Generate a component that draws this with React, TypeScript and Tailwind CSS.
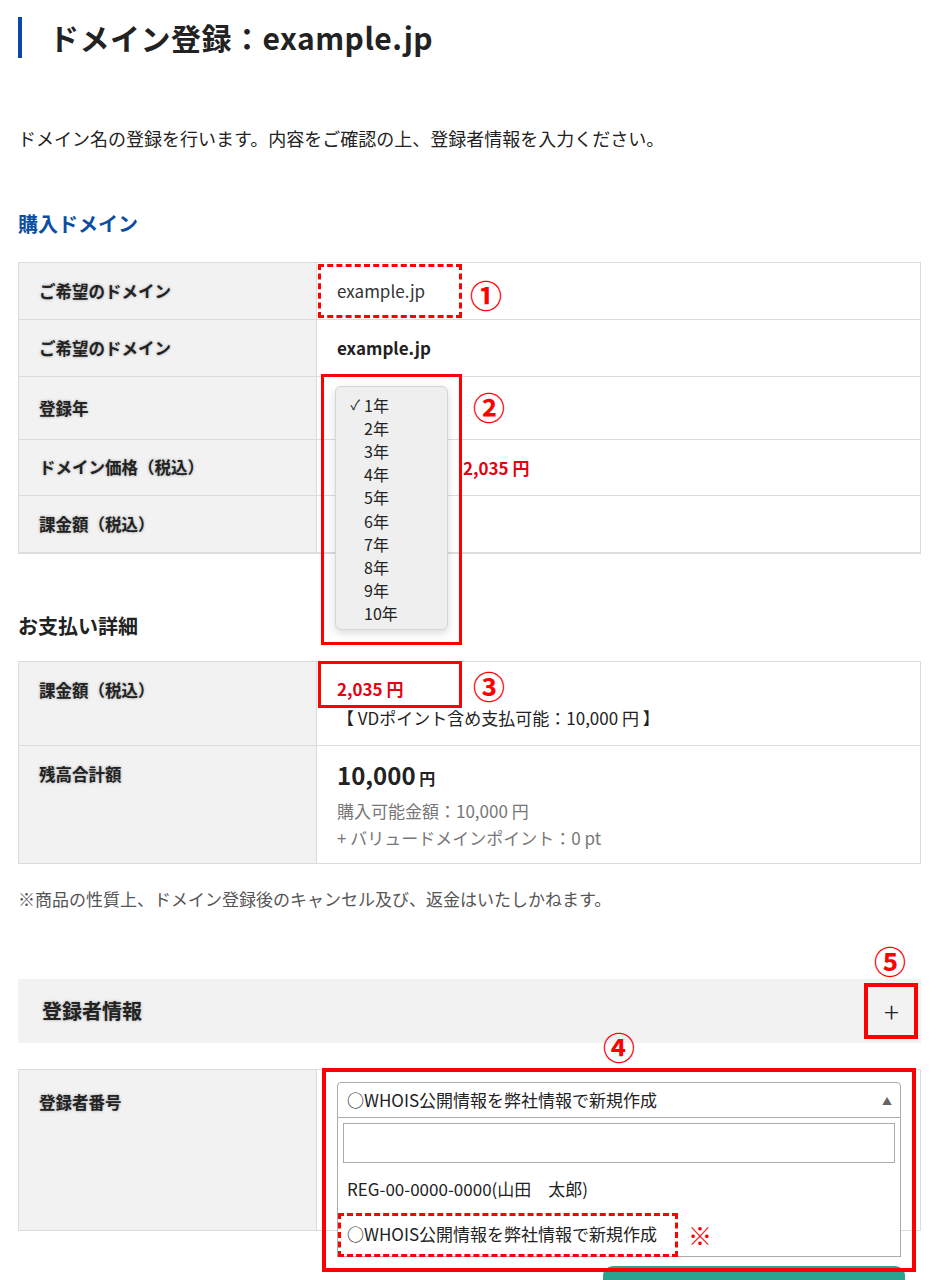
const font = { fontFamily: '"Noto Sans CJK JP", "Noto Sans", sans-serif' };

const label =
  "bg-[#f2f2f2] border-r border-[#dcdcdc] w-[298px] shrink-0 pl-[20px] text-[16.5px] font-bold text-[#222] [text-shadow:0_0_3px_rgba(0,0,0,0.35)]";

function Row({ name, h, children }: { name: string; h: string; children?: React.ReactNode }) {
  return (
    <div className={`flex border-b border-[#dcdcdc] last:border-b-0 ${h}`}>
      <div className={`${label} flex items-center`}>{name}</div>
      <div className="flex-1 flex items-center pl-[20px] text-[17px] text-[#222]">{children}</div>
    </div>
  );
}

function Mark({ children, className }: { children: React.ReactNode; className: string }) {
  return (
    <span className={`absolute text-[#f00] text-[32px] leading-none font-bold ${className}`}>{children}</span>
  );
}

export default function App() {
  const years = ["1年", "2年", "3年", "4年", "5年", "6年", "7年", "8年", "9年", "10年"];
  return (
    <div style={font} className="bg-white w-[940px] h-[1280px] overflow-hidden pt-[17px] pl-[18px] pr-[19px] text-[#222]">
      <h1 className="h-[41px] border-l-[4px] border-[#0a47a9] flex items-center pl-[27px] text-[30px] font-bold tracking-[0.5px]">
        ドメイン登録：example.jp
      </h1>

      <p className="mt-[68px] text-[18px] leading-[24px]">
        ドメイン名の登録を行います。内容をご確認の上、登録者情報を入力ください。
      </p>

      <h2 className="mt-[61px] text-[20px] leading-[26px] font-bold text-[#0a4ea3]">購入ドメイン</h2>

      {/* table 1 */}
      <div className="relative mt-[25px] border border-[#dcdcdc]">
        <Row name="ご希望のドメイン" h="h-[57px]">
          <span className="text-[#333]">example.jp</span>
        </Row>
        <Row name="ご希望のドメイン" h="h-[57px]">
          <span className="font-bold">example.jp</span>
        </Row>
        <Row name="登録年" h="h-[63px]" />
        <Row name="ドメイン価格（税込）" h="h-[56px]">
          <span className="pl-[126px] font-bold text-[#e60012]">2,035 円</span>
        </Row>
        <Row name="課金額（税込）" h="h-[57px]" />

        <div className="absolute left-[299px] top-[1px] w-[144px] h-[54px] border-[3px] border-dashed border-[#f00]" />
        <Mark className="left-[451px] top-[15px]">①</Mark>

        <div className="absolute left-[302px] top-[111px] w-[141px] h-[271px] border-[3px] border-[#f00]" />
        <div className="absolute left-[316px] top-[123px] w-[113px] h-[244px] rounded-[6px] bg-[#efefef] border border-[#d6d6d6] shadow-[0_3px_8px_rgba(0,0,0,0.15)] pt-[6px]">
          {years.map((y, i) => (
            <div key={y} className="h-[23.2px] flex items-center text-[16px] text-[#222]">
              <span className="w-[28px] text-right pr-[4px] text-[14px]">{i === 0 ? "✓" : ""}</span>
              {y}
            </div>
          ))}
        </div>
        <Mark className="left-[454px] top-[127px]">②</Mark>
      </div>

      <h2 className="mt-[59px] text-[20px] leading-[26px] font-bold">お支払い詳細</h2>

      {/* table 2 */}
      <div className="relative mt-[22px] border border-[#dcdcdc]">
        <div className="flex border-b border-[#dcdcdc] h-[84px]">
          <div className={`${label} pt-[16px]`}>課金額（税込）</div>
          <div className="flex-1 pl-[20px] pt-[15px]">
            <div className="text-[17px] leading-[24px] font-bold text-[#e60012]">2,035 円</div>
            <div className="text-[17px] leading-[24px] mt-[5px] text-[#222]">【 VDポイント含め支払可能：10,000 円 】</div>
          </div>
        </div>
        <div className="flex h-[117px]">
          <div className={`${label} pt-[16px]`}>残高合計額</div>
          <div className="flex-1 pl-[20px] pt-[13px]">
            <div className="leading-[32px] font-semibold">
              <span className="text-[24px]">10,000</span> <span className="text-[16px]">円</span>
            </div>
            <div className="mt-[3px] text-[17px] leading-[27px] text-[#777]">購入可能金額：10,000 円</div>
            <div className="text-[17px] leading-[27px] text-[#777]">+ バリュードメインポイント：0 pt</div>
          </div>
        </div>
        <div className="absolute left-[299px] top-[-1px] w-[144px] h-[47px] border-[3px] border-[#f00]" />
        <Mark className="left-[454px] top-[7px]">③</Mark>
      </div>

      <p className="mt-[24px] text-[17px] leading-[22px] text-[#555]">
        ※商品の性質上、ドメイン登録後のキャンセル及び、返金はいたしかねます。
      </p>

      {/* registrant */}
      <div className="relative mt-[69px] h-[64px] bg-[#f2f2f2] flex items-center justify-between pl-[24px] pr-[22px]">
        <span className="text-[20px] font-bold [text-shadow:0_0_3px_rgba(0,0,0,0.35)]">登録者情報</span>
        <span className="text-[28px] font-light leading-none">+</span>
        <div className="absolute right-[3px] top-[4px] w-[54px] h-[56px] border-[4px] border-[#f00]" />
        <Mark className="right-[15px] top-[-35px]">⑤</Mark>
        <Mark className="left-[585px] top-[51px]">④</Mark>
      </div>

      <div className="relative mt-[26px] h-[162px] border border-[#dcdcdc] flex">
        <div className={`${label} pt-[20px]`}>登録者番号</div>
        <div className="flex-1 pl-[20px] pr-[19px] pt-[12px]">
          <div className="relative">
            <div className="h-[36px] border border-[#aaa] rounded-t-[4px] flex items-center justify-between pl-[9px] pr-[8px] text-[17px] bg-white">
              <span>○WHOIS公開情報を弊社情報で新規作成</span>
              <span className="text-[10px] text-[#666]">▲</span>
            </div>
            <div className="absolute left-0 right-0 top-[36px] h-[139px] bg-white border border-t-0 border-[#aaa] z-10">
              <div className="mx-[5px] mt-[5px] h-[40px] border border-[#aaa]" />
              <div className="pl-[9px] mt-[14px] text-[17px] leading-[24px]">REG-00-0000-0000(山田　太郎)</div>
              <div className="pl-[9px] mt-[21px] text-[17px] leading-[24px]">○WHOIS公開情報を弊社情報で新規作成</div>
              <div className="absolute left-[0px] top-[95px] w-[340px] h-[44px] border-[3px] border-dashed border-[#f00]" />
              <span className="absolute left-[350px] top-[105px] text-[24px] leading-none text-[#f00]">※</span>
            </div>
          </div>
        </div>
        <div className="absolute left-[303px] top-[-2px] w-[594px] h-[204px] border-[4px] border-[#f00] z-20" />
      </div>

      <div className="mt-[35px] ml-[585px] w-[302px] h-[48px] rounded-t-[10px] bg-[#2aa48e]" />
    </div>
  );
}
